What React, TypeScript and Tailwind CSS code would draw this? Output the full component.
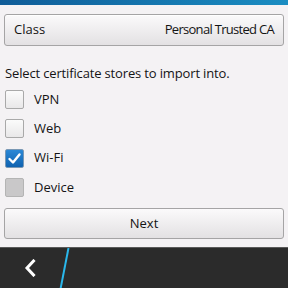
import React from "react";

const font = { fontFamily: '"Open Sans", "Noto Sans", sans-serif' };

function Box({ state }: { state: "off" | "on" | "disabled" }) {
  if (state === "on") {
    return (
      <div className="w-[19px] h-[19px] rounded-[2px] border border-[#7a98b4] bg-gradient-to-b from-[#2a88d6] to-[#0f62b0] flex items-center justify-center">
        <svg width="15" height="13" viewBox="0 0 15 13">
          <path d="M2.5 7 L6 10.5 L12.5 2.5" stroke="white" strokeWidth="2.4" fill="none" strokeLinecap="round" strokeLinejoin="round" />
        </svg>
      </div>
    );
  }
  if (state === "disabled") {
    return <div className="w-[19px] h-[19px] rounded-[2px] border border-[#b4b4b4] bg-[#c9c8c9]" />;
  }
  return <div className="w-[19px] h-[19px] rounded-[2px] border border-[#a9a9a9] bg-gradient-to-b from-[#fbfbfb] to-[#e9e8e9]" />;
}

function Row({ label, state }: { label: string; state: "off" | "on" | "disabled" }) {
  return (
    <div className="flex items-center h-[29.3px] pl-[5px]">
      <Box state={state} />
      <span className="ml-[10px] text-[13px] text-[#141414]">{label}</span>
    </div>
  );
}

export default function App() {
  return (
    <div className="w-[288px] h-[288px] bg-[#f4f2f4] flex flex-col overflow-hidden" style={font}>
      <div className="h-[5px] bg-gradient-to-r from-[#105c98] to-[#1b8dc2]" />
      <div className="px-[4px] pt-[9px]">
        <div className="h-[32px] rounded-[3px] border border-[#a5a4a5] bg-gradient-to-b from-[#fbfafb] to-[#e3e1e3] shadow-[inset_0_1px_0_#ffffff] flex items-center justify-between pl-[9px] pr-[9px] text-[13px] text-[#141414]">
          <span>Class</span>
          <span className="tracking-[-0.7px]">Personal Trusted CA</span>
        </div>
      </div>
      <div className="pl-[5px] mt-[18px] text-[13px] text-[#141414] leading-[18px] tracking-[-0.15px]">
        Select certificate stores to import into.
      </div>
      <div className="mt-[3px] flex flex-col">
        <Row label="VPN" state="off" />
        <Row label="Web" state="off" />
        <Row label="Wi-Fi" state="on" />
        <Row label="Device" state="disabled" />
      </div>
      <div className="px-[4px] mt-[6px]">
        <div className="h-[31px] rounded-[3px] border border-[#a5a4a5] bg-gradient-to-b from-[#fbfafb] to-[#e3e1e3] flex items-center justify-center text-[13px] text-[#141414]">
          Next
        </div>
      </div>
      <div className="flex-1" />
      <div className="h-[41px] bg-[#2b2b2b] border-t border-[#5a5a5a] relative">
        <svg className="absolute left-[23px] top-[11px]" width="14" height="18" viewBox="0 0 14 18">
          <path d="M10.5 2 L4 9 L10.5 16" stroke="white" strokeWidth="3" fill="none" strokeLinecap="square" strokeLinejoin="miter" />
        </svg>
        <svg className="absolute left-0 top-0" width="80" height="41" viewBox="0 0 80 41">
          <path d="M68.5 0 L60.5 41" stroke="#2ab8ec" strokeWidth="2" fill="none" />
        </svg>
      </div>
    </div>
  );
}
